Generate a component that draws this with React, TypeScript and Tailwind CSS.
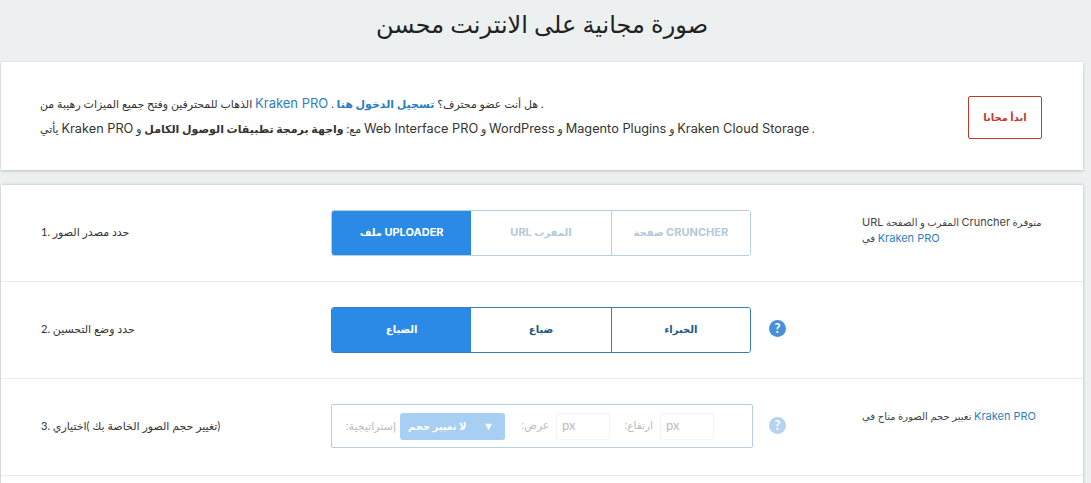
const L = ({ children, className = '' }: { children: React.ReactNode; className?: string }) => (
  <span className={`font-['Inter'] ${className}`}>{children}</span>
);

const HelpDot = ({ faded }: { faded?: boolean }) => (
  <span
    className={`mb-[3px] flex h-[17px] w-[17px] items-center justify-center rounded-full bg-[#4a90d9] text-[13px] font-bold leading-none text-white ${
      faded ? 'opacity-40' : ''
    }`}
  >
    ?
  </span>
);

const Row = ({
  label,
  children,
  help,
  note,
  noteClass,
}: {
  label: string;
  children: React.ReactNode;
  help?: React.ReactNode;
  note?: React.ReactNode;
  noteClass?: string;
}) => (
  <div className="grid h-[97px] grid-cols-[330px_422px_109px_1fr] items-center border-b border-[#e8ecef]">
    <p dir="rtl" className="pb-[2px] pl-10 text-left text-[11px] text-[#333]">
      {label}
    </p>
    <div>{children}</div>
    <div className="pl-[16px]">{help}</div>
    <div dir="rtl" className={`text-left text-[10px] leading-[16px] text-[#444] ${noteClass}`}>
      {note}
    </div>
  </div>
);

const Segment = ({
  items,
  muted,
}: {
  items: React.ReactNode[];
  muted?: boolean;
}) => (
  <div
    className={`grid h-[46px] w-[420px] grid-cols-3 overflow-hidden rounded-[3px] border ${
      muted ? 'border-[#b5d0e2]' : 'border-[#3b7fb0]'
    }`}
  >
    {items.map((item, i) => (
      <div
        key={i}
        dir="rtl"
        className={`flex items-center justify-center pb-[1px] text-[10px] font-bold ${
          i === 0
            ? 'bg-[#2b8ae5] text-white'
            : muted
              ? 'bg-white text-[#b4c9da]'
              : 'bg-white text-[#22587f]'
        } ${i === 2 ? (muted ? 'border-l border-[#b5d0e2]' : 'border-l border-[#3b7fb0]') : ''}`}
      >
        <span>{item}</span>
      </div>
    ))}
  </div>
);

const App = () => {
  return (
    <div
      className="h-[483px] w-[1091px] overflow-hidden bg-[#ecf0f1] pl-[1px] pr-[8px]"
      style={{ fontFamily: '"Lato", "Liberation Sans", "DejaVu Sans", sans-serif' }}
    >
      <h1
        dir="rtl"
        className="flex h-[62px] items-center justify-center pb-[15px] text-[24px] font-normal text-[#222]"
      >
        صورة مجانية على الانترنت محسن
      </h1>

      <div className="flex h-[108px] items-center justify-between bg-white pl-[39px] pr-[41px] shadow-[0_1px_3px_rgba(0,0,0,0.2)]">
        <div className="text-[11px] leading-[25px] text-[#333]">
          <p dir="rtl" className="text-left">
            . هل أنت عضو محترف؟{' '}
            <a className="font-bold text-[#2d7fc1]">تسجيل الدخول هنا</a> .{' '}
            <L className="text-[13px] text-[#2d7fc1]">Kraken PRO</L> الذهاب للمحترفين وفتح جميع الميزات رهيبة من
          </p>
          <p dir="rtl" className="text-left">
            . <L className="text-[12.75px]">Kraken Cloud Storage</L> و <L className="text-[12.75px]">Magento Plugins</L> و{' '}
            <L className="text-[12.75px]">WordPress</L> و <L className="text-[12.75px]">Web Interface PRO</L> مع:{' '}
            <b>واجهة برمجة تطبيقات الوصول الكامل</b> و <L className="text-[12.75px]">Kraken PRO</L> يأتي
          </p>
        </div>
        <button className="mt-[3px] flex h-[43px] w-[74px] items-center justify-center rounded-[2px] border border-[#c0392b] text-[10px] font-bold text-[#c0392b]">
          ابدأ مجانا
        </button>
      </div>

      <div className="mt-[15px] h-[400px] bg-white shadow-[0_0_3px_rgba(0,0,0,0.25)]">
        <Row
          label="حدد مصدر الصور .1"
          noteClass="pb-[6px]"
          note={
            <>
              متوفرة <L className="text-[11px]">Cruncher</L> المقرب و الصفحة <L className="text-[11px]">URL</L>
              <br />
              <L className="text-[11px] text-[#2d7fc1]">Kraken PRO</L> في
            </>
          }
        >
          <Segment
            muted
            items={[
              <><L className="text-[11px]">UPLOADER</L> ملف</>,
              <>المقرب <L className="text-[11px]">URL</L></>,
              <><L className="text-[11px]">CRUNCHER</L> صفحة</>,
            ]}
          />
        </Row>
        <Row label="حدد وضع التحسين .2" help={<HelpDot />}>
          <Segment items={['الضياع', 'ضياع', 'الخبراء']} />
        </Row>
        <Row
          label="(تغيير حجم الصور الخاصة بك )اختياري .3"
          help={<HelpDot faded />}
          noteClass="pb-[22px]"
          note={
            <>
              <L className="text-[11px] text-[#2d7fc1]">Kraken PRO</L> تغيير حجم الصورة متاح في
            </>
          }
        >
          <div className="mb-[2px] flex h-[44px] w-[422px] items-center rounded-[2px] border border-[#b5d0e2] pl-[13px] text-[10.5px] text-[#bbb]">
            <span dir="rtl" className="w-[55px] pr-[4px] text-[11px]">إستراتيجية:</span>
            <div className="flex h-[27px] w-[105px] items-center justify-between rounded-[3px] bg-[#a6cff3] pl-2 pr-[11px] text-[10px] font-bold text-white">
              <span dir="rtl">لا تغيير حجم</span>
              <span className="text-[11px]">▼</span>
            </div>
            <span dir="rtl" className="ml-[12px] w-[39px] pr-[7px]">عرض:</span>
            <div className="flex h-[27px] w-[54px] items-center border border-[#f3f5f6] pl-[5px] text-[13px]">px</div>
            <span dir="rtl" className="ml-[11px] w-[39px] pr-[7px]">ارتفاع:</span>
            <div className="flex h-[27px] w-[54px] items-center border border-[#f3f5f6] pl-[5px] text-[13px]">px</div>
          </div>
        </Row>
      </div>
    </div>
  );
};

export default App;
